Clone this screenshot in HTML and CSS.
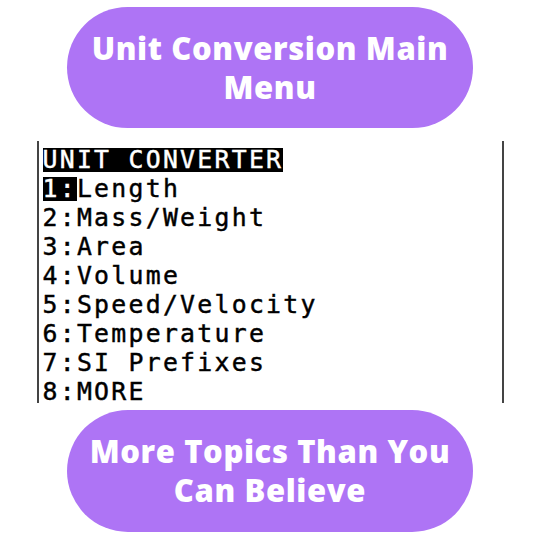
FILE: index.html
```html
<!DOCTYPE html>
<html>
<head>
<meta charset="utf-8">
<link rel="stylesheet" href="styles.css">
</head>
<body>
<div class="page">
  <div class="pill pill-top">Unit Conversion Main<br>Menu</div>
  <div class="screen">
    <div class="line"><span class="inv">UNIT CONVERTER</span></div>
    <div class="line"><span class="inv">1:</span>Length</div>
    <div class="line">2:Mass/Weight</div>
    <div class="line">3:Area</div>
    <div class="line">4:Volume</div>
    <div class="line">5:Speed/Velocity</div>
    <div class="line">6:Temperature</div>
    <div class="line">7:SI Prefixes</div>
    <div class="line">8:MORE</div>
  </div>
  <div class="pill pill-bottom">More Topics Than You<br>Can Believe</div>
</div>
</body>
</html>
```
FILE: styles.css
```css
html, body {
  margin: 0;
  padding: 0;
  background: #ffffff;
}
.page {
  width: 540px;
  height: 540px;
  display: flex;
  flex-direction: column;
  align-items: center;
}
.pill {
  width: 406px;
  height: 121px;
  border-radius: 61px;
  background: #ae74f5;
  color: #ffffff;
  font-family: "Open Sans", sans-serif;
  font-weight: 800;
  font-size: 31px;
  letter-spacing: 0.6px;
  line-height: 39px;
  text-align: center;
  display: flex;
  align-items: center;
  justify-content: center;
  box-sizing: border-box;
}
.pill-top {
  margin-top: 7px;
}
.pill-bottom {
  margin-top: 7px;
  height: 122px;
}
.screen {
  margin-top: 13px;
  width: 467px;
  height: 262px;
  box-sizing: border-box;
  border-left: 2px solid #444444;
  border-right: 2px solid #444444;
  padding: 4px 0 0 4px;
  font-family: "DejaVu Sans Mono", monospace;
  font-size: 24.8px;
  letter-spacing: 2.27px;
  -webkit-text-stroke: 0.45px currentColor;
  color: #000000;
}
.line {
  height: 29px;
  line-height: 29px;
  white-space: pre;
}
.inv {
  display: inline-block;
  line-height: 24px;
  background: #000000;
  color: #ffffff;
}
```
